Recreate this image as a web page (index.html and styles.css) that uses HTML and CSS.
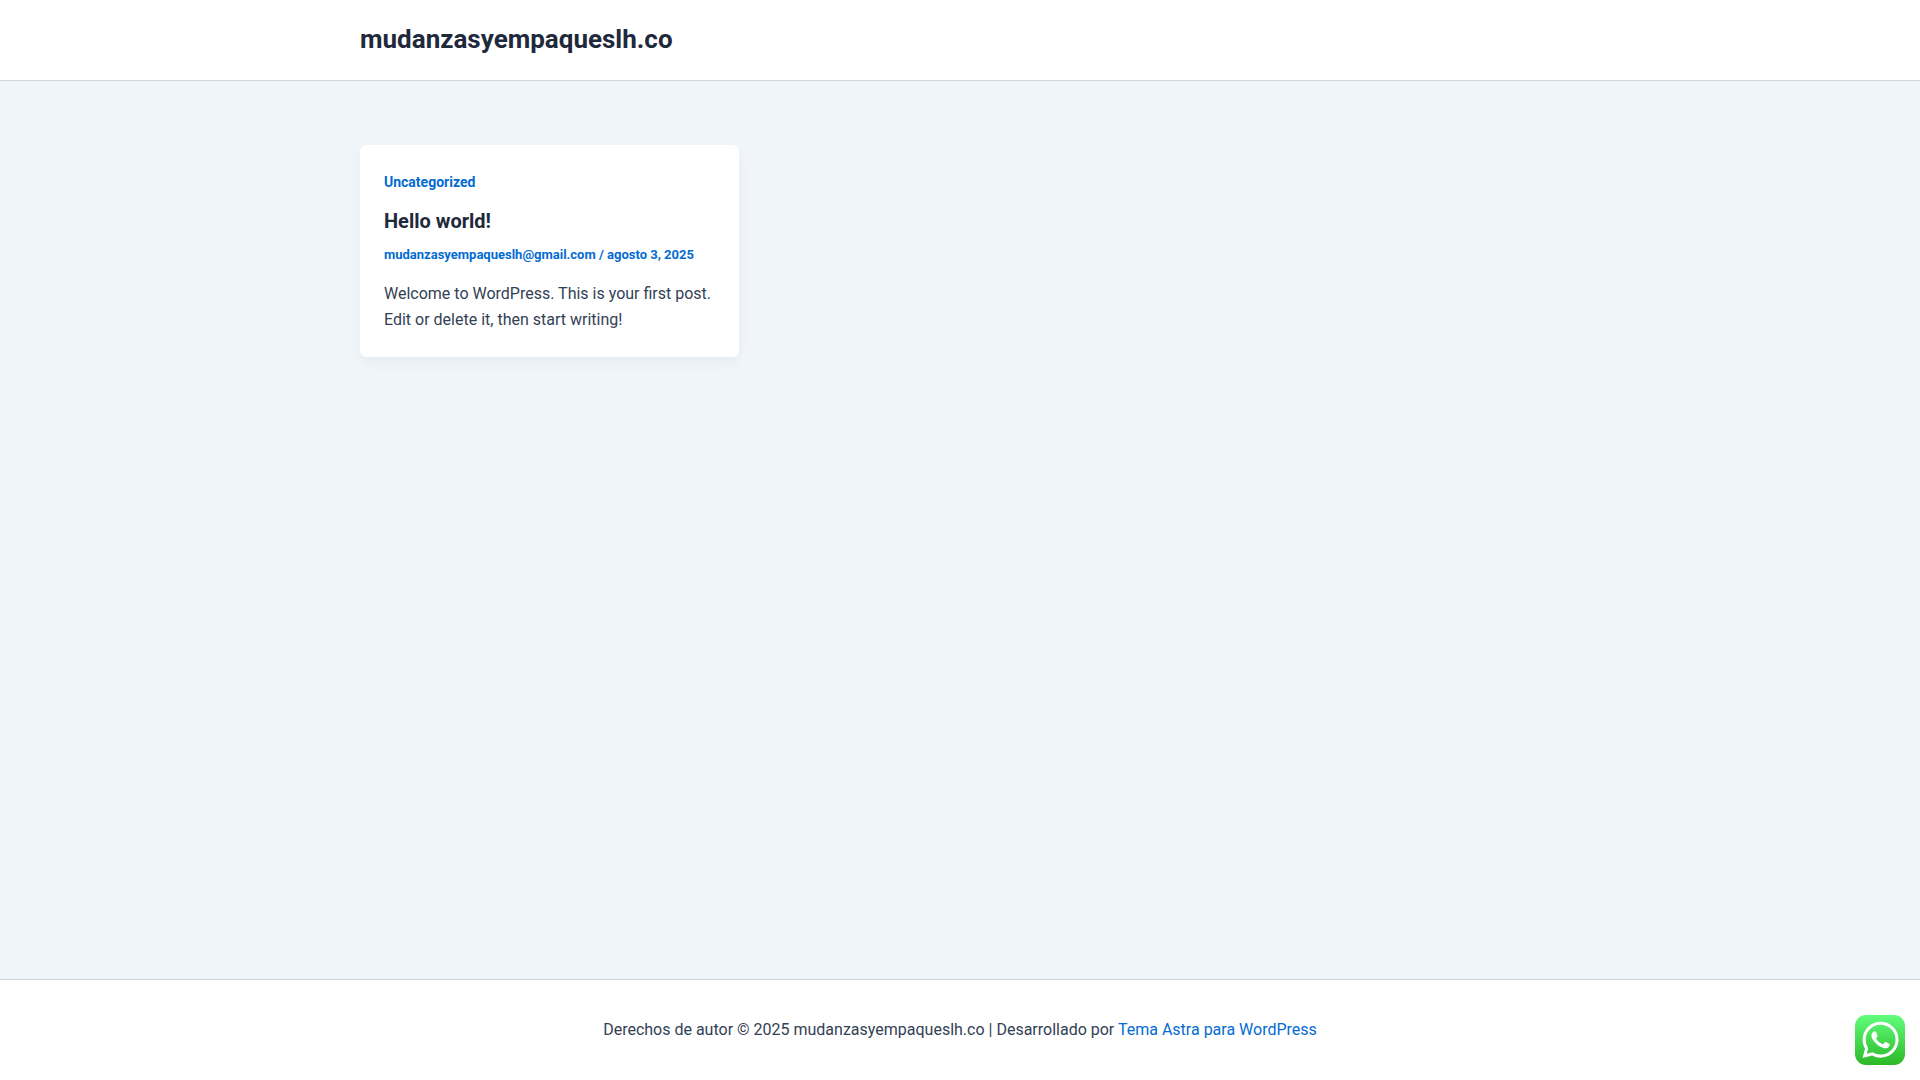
FILE: index.html
```html
<!DOCTYPE html>
<html lang="es">
<head>
    <meta charset="UTF-8">
    <meta name="viewport" content="width=device-width, initial-scale=1.0">
    <title>mudanzasyempaqueslh.co</title>
    <link rel="stylesheet" href="styles.css">
</head>
<body>
    <header class="site-header">
        <div class="container">
            <h1 class="site-title"><a href="#">mudanzasyempaqueslh.co</a></h1>
        </div>
    </header>

    <main class="site-content">
        <div class="container post-grid">
            <article class="post-card">
                <a class="post-category" href="#">Uncategorized</a>
                <h2 class="post-title"><a href="#">Hello world!</a></h2>
                <div class="post-meta">
                    <a href="#">mudanzasyempaqueslh@gmail.com</a> / <span>agosto 3, 2025</span>
                </div>
                <p class="post-excerpt">Welcome to WordPress. This is your first post. Edit or delete it, then start writing!</p>
            </article>
        </div>
    </main>

    <footer class="site-footer">
        <p>Derechos de autor © 2025 mudanzasyempaqueslh.co | Desarrollado por <a href="#">Tema Astra para WordPress</a></p>
    </footer>

    <a class="whatsapp-button" href="#" aria-label="WhatsApp">
        <svg width="50" height="50" viewBox="0 0 50 50" aria-hidden="true">
            <defs>
                <linearGradient id="wa-green" x1="0" y1="0" x2="0" y2="1">
                    <stop offset="0" stop-color="#61fd7d"/>
                    <stop offset="1" stop-color="#2bb826"/>
                </linearGradient>
            </defs>
            <rect width="50" height="50" rx="11" fill="url(#wa-green)"/>
            <path transform="translate(7.4 6.7) scale(1.51)" fill="#fff" d="M17.472 14.382c-.297-.149-1.758-.867-2.03-.967-.273-.099-.471-.148-.67.15-.197.297-.767.966-.94 1.164-.173.199-.347.223-.644.075-.297-.15-1.255-.463-2.39-1.475-.883-.788-1.48-1.761-1.653-2.059-.173-.297-.018-.458.13-.606.134-.133.298-.347.446-.52.149-.174.198-.298.298-.497.099-.198.05-.371-.025-.52-.075-.149-.669-1.612-.916-2.207-.242-.579-.487-.5-.669-.51-.173-.008-.371-.01-.57-.01-.198 0-.52.074-.792.372-.272.297-1.04 1.016-1.04 2.479 0 1.462 1.065 2.875 1.213 3.074.149.198 2.096 3.2 5.077 4.487.709.306 1.262.489 1.694.625.712.227 1.36.195 1.871.118.571-.085 1.758-.719 2.006-1.413.248-.694.248-1.289.173-1.413-.074-.124-.272-.198-.57-.347m-5.421 7.403h-.004a9.87 9.87 0 01-5.031-1.378l-.361-.214-3.741.982.998-3.648-.235-.374a9.86 9.86 0 01-1.51-5.26c.001-5.45 4.436-9.884 9.888-9.884 2.64 0 5.122 1.03 6.988 2.898a9.825 9.825 0 012.893 6.994c-.003 5.45-4.437 9.884-9.885 9.884m8.413-18.297A11.815 11.815 0 0012.05 0C5.495 0 .16 5.335.157 11.892c0 2.096.547 4.142 1.588 5.945L.057 24l6.305-1.654a11.882 11.882 0 005.683 1.448h.005c6.554 0 11.89-5.335 11.893-11.893a11.821 11.821 0 00-3.48-8.413z"/>
        </svg>
    </a>
</body>
</html>
```
FILE: styles.css
```css
* {
    box-sizing: border-box;
}

body {
    margin: 0;
    min-height: 100vh;
    display: flex;
    flex-direction: column;
    background-color: #f0f5fa;
    color: #334155;
    font-family: Roboto, sans-serif;
    font-size: 16px;
    line-height: 26px;
}

h1, h2, p {
    margin: 0;
}

a {
    color: #046bd2;
    text-decoration: none;
}

.container {
    width: 100%;
    max-width: 1240px;
    margin: 0 auto;
    padding: 0 20px;
}

/* Header */
.site-header {
    padding: 24px 0 26px;
    background-color: #fff;
    border-bottom: 1px solid #d1d5db;
}

.site-title {
    font-size: 26px;
    font-weight: 700;
    line-height: 30px;
}

.site-title a,
.post-title a {
    color: #1e293b;
}

/* Posts */
.site-content {
    flex: 1;
    padding: 64px 0;
}

.post-grid {
    display: grid;
    grid-template-columns: repeat(3, 1fr);
    align-items: start;
    gap: 32px;
}

.post-card {
    padding: 24px;
    background-color: #fff;
    border-radius: 6px;
    box-shadow: 0 6px 15px -2px rgba(16, 24, 40, 0.05);
}

.post-category {
    display: block;
    font-size: 14px;
    font-weight: 700;
    line-height: 26px;
}

.post-title {
    margin: 13px 0 10px;
    font-size: 20px;
    font-weight: 700;
    line-height: 26px;
}

.post-meta {
    margin-bottom: 15px;
    color: #046bd2;
    font-size: 13px;
    font-weight: 700;
    line-height: 22px;
}

/* Footer */
.site-footer {
    padding: 37px 20px;
    background-color: #fff;
    border-top: 1px solid #d1d5db;
    text-align: center;
}

.whatsapp-button {
    position: fixed;
    right: 15px;
    bottom: 15px;
}

.whatsapp-button svg {
    display: block;
}

@media (max-width: 921px) {
    .post-grid {
        grid-template-columns: 1fr;
    }
}
```
